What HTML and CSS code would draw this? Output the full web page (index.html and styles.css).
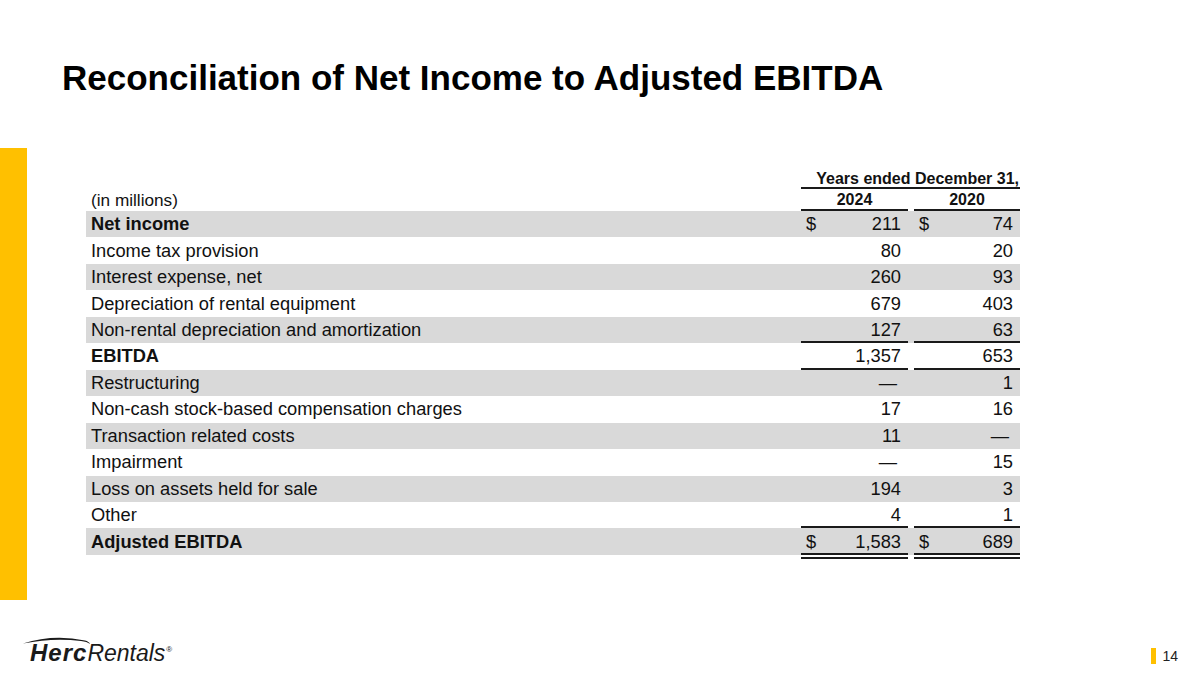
FILE: index.html
```html
<!DOCTYPE html>
<html lang="en">
<head>
<meta charset="utf-8">
<title>Reconciliation of Net Income to Adjusted EBITDA</title>
<link rel="stylesheet" href="styles.css">
</head>
<body>
<div class="slide">
  <h1 class="title">Reconciliation of Net Income to Adjusted EBITDA</h1>
  <div class="main">
    <div class="accent"></div>
    <div class="table-wrap">
      <table class="recon">
        <colgroup>
          <col class="c-label"><col class="c-val1"><col class="c-gap"><col class="c-val2">
        </colgroup>
        <thead>
          <tr class="h1row">
            <th></th>
            <th colspan="3" class="hd hd-years line-b">Years ended December 31,</th>
          </tr>
          <tr class="h2row">
            <th class="units">(in millions)</th>
            <th class="hd line-b">2024</th>
            <th></th>
            <th class="hd line-b">2020</th>
          </tr>
        </thead>
        <tbody>
          <tr class="g b"><td class="lab">Net income</td><td class="v"><div><span>$</span><span>211</span></div></td><td></td><td class="v"><div><span>$</span><span>74</span></div></td></tr>
          <tr><td class="lab">Income tax provision</td><td class="v"><div><span></span><span>80</span></div></td><td></td><td class="v"><div><span></span><span>20</span></div></td></tr>
          <tr class="g"><td class="lab">Interest expense, net</td><td class="v"><div><span></span><span>260</span></div></td><td></td><td class="v"><div><span></span><span>93</span></div></td></tr>
          <tr><td class="lab">Depreciation of rental equipment</td><td class="v"><div><span></span><span>679</span></div></td><td></td><td class="v"><div><span></span><span>403</span></div></td></tr>
          <tr class="g"><td class="lab">Non-rental depreciation and amortization</td><td class="v line-b"><div><span></span><span>127</span></div></td><td></td><td class="v line-b"><div><span></span><span>63</span></div></td></tr>
          <tr class="b"><td class="lab">EBITDA</td><td class="v line-b"><div class="reg"><span></span><span>1,357</span></div></td><td></td><td class="v line-b"><div class="reg"><span></span><span>653</span></div></td></tr>
          <tr class="g"><td class="lab">Restructuring</td><td class="v"><div><span></span><span class="dash">—</span></div></td><td></td><td class="v"><div><span></span><span>1</span></div></td></tr>
          <tr><td class="lab">Non-cash stock-based compensation charges</td><td class="v"><div><span></span><span>17</span></div></td><td></td><td class="v"><div><span></span><span>16</span></div></td></tr>
          <tr class="g"><td class="lab">Transaction related costs</td><td class="v"><div><span></span><span>11</span></div></td><td></td><td class="v"><div><span></span><span class="dash">—</span></div></td></tr>
          <tr><td class="lab">Impairment</td><td class="v"><div><span></span><span class="dash">—</span></div></td><td></td><td class="v"><div><span></span><span>15</span></div></td></tr>
          <tr class="g"><td class="lab">Loss on assets held for sale</td><td class="v"><div><span></span><span>194</span></div></td><td></td><td class="v"><div><span></span><span>3</span></div></td></tr>
          <tr><td class="lab">Other</td><td class="v line-b"><div><span></span><span>4</span></div></td><td></td><td class="v line-b"><div><span></span><span>1</span></div></td></tr>
          <tr class="g b"><td class="lab">Adjusted EBITDA</td><td class="v line-b"><div class="reg"><span>$</span><span>1,583</span></div></td><td></td><td class="v line-b"><div class="reg"><span>$</span><span>689</span></div></td></tr>
          <tr class="spacer"><td></td><td class="line-b"></td><td></td><td class="line-b"></td></tr>
        </tbody>
      </table>
    </div>
  </div>
  <div class="footer">
    <div class="logo">
      <svg class="swoosh" width="70" height="10" viewBox="0 0 70 10" aria-hidden="true">
        <path d="M0 8.5 Q30 -1 62 5.5 Q66 6.5 67 9 Q64 6.5 58 6 Q30 2.5 0 8.5 Z" fill="#1a1a1a"/>
      </svg>
      <span class="herc">Herc</span><span class="rentals">Rentals</span><span class="reg-mark">®</span>
    </div>
    <div class="page"><span class="page-bar"></span><span class="page-num">14</span></div>
  </div>
</div>
</body>
</html>
```
FILE: styles.css
```css
html, body {
  margin: 0;
  padding: 0;
  background: #ffffff;
}

.slide {
  width: 1200px;
  height: 675px;
  display: flex;
  flex-direction: column;
  font-family: "Liberation Sans", Arial, sans-serif;
  color: #000;
  overflow: hidden;
}

.title {
  margin: 0;
  box-sizing: border-box;
  height: 148px;
  padding: 57px 0 0 62px;
  font-size: 35px;
  line-height: 42px;
  font-weight: 700;
  color: #000;
}

.main {
  display: flex;
  height: 452px;
}

.accent {
  width: 27px;
  background: #ffc000;
  flex: none;
}

.table-wrap {
  margin-left: 59px;
  padding-top: 20px;
}

.recon {
  table-layout: fixed;
  border-collapse: separate;
  border-spacing: 0;
  width: 934px;
  color: #111;
}

.c-label { width: 715px; }
.c-val1 { width: 107px; }
.c-gap { width: 6px; }
.c-val2 { width: 106px; }

.recon th, .recon td {
  padding: 0;
  vertical-align: middle;
}

.h1row { height: 21px; }
.h2row { height: 22px; }

.hd {
  font-size: 16px;
  font-weight: 700;
  text-align: center;
  line-height: 18px;
}

.hd-years {
  text-align: right;
  padding-right: 1px !important;
}

.units {
  text-align: left;
  font-weight: 400;
  font-size: 17.2px;
  padding-left: 5px !important;
  line-height: 20px;
}

.line-b {
  box-shadow: inset 0 -2px 0 #1a1a1a;
}

.recon tbody tr {
  height: 26.46px;
}

.recon tbody tr.spacer {
  height: 4px;
}

.recon tbody tr.spacer td {
  line-height: 0;
  font-size: 0;
}

.recon tbody td {
  font-size: 18.3px;
  line-height: 24px;
}

.recon tr.g {
  background: #d9d9d9;
}

.lab {
  padding-left: 5px !important;
  white-space: nowrap;
}

.b .lab {
  font-weight: 700;
}

.v div {
  display: flex;
  justify-content: space-between;
  padding: 0 7px 0 5px;
}

.dash {
  padding-right: 4px;
}

.footer {
  flex: 1;
  display: flex;
  justify-content: space-between;
  align-items: flex-start;
  padding: 35px 22px 0 23px;
}

.logo {
  position: relative;
  padding-top: 7px;
  padding-left: 7px;
  color: #1a1a1a;
  font-size: 23px;
  line-height: 22px;
  font-style: italic;
  white-space: nowrap;
}

.swoosh {
  position: absolute;
  left: 0;
  top: 0;
}

.herc {
  font-weight: 700;
  letter-spacing: 1px;
  font-size: 24px;
}

.rentals {
  font-weight: 400;
  letter-spacing: 0;
}

.reg-mark {
  font-style: normal;
  font-size: 8px;
  vertical-align: top;
  position: relative;
  top: -3px;
  margin-left: 1px;
}

.page {
  display: flex;
  align-items: center;
  gap: 6px;
  padding-top: 13px;
}

.page-bar {
  width: 5px;
  height: 16px;
  background: #ffc000;
}

.page-num {
  font-size: 14px;
  color: #222;
  line-height: 16px;
}
```
